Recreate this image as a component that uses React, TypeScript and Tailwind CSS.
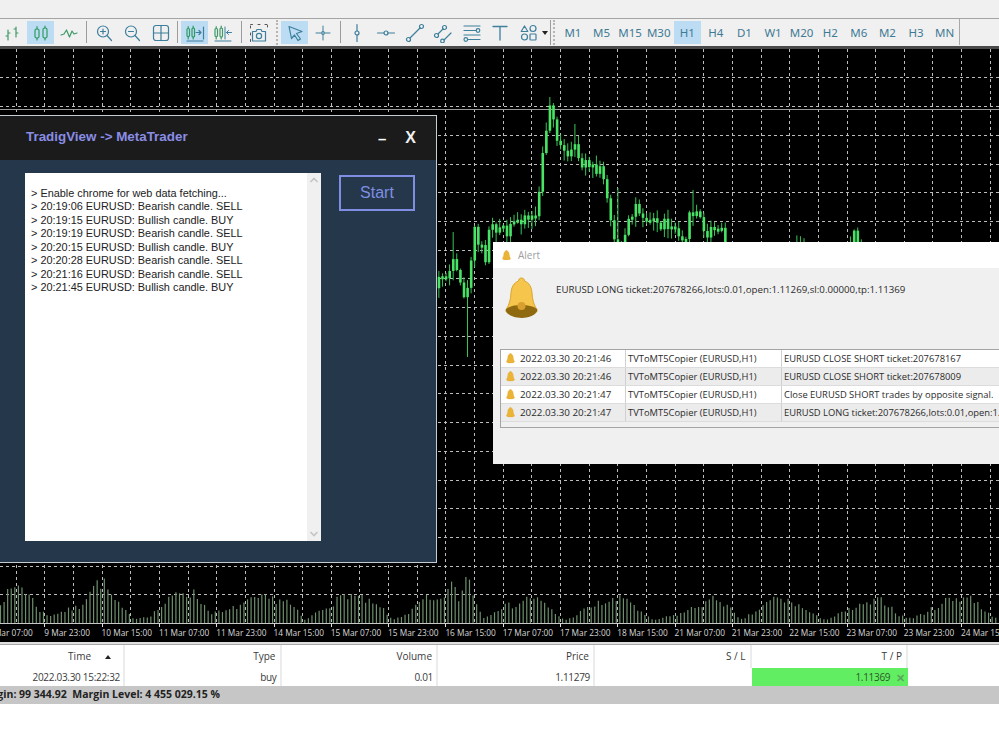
import React from "react";

function rng(seed: number) {
  return () => {
    seed |= 0;
    seed = (seed + 0x6d2b79f5) | 0;
    let t = Math.imul(seed ^ (seed >>> 15), 1 | seed);
    t = (t + Math.imul(t ^ (t >>> 7), 61 | t)) ^ t;
    return ((t ^ (t >>> 14)) >>> 0) / 4294967296;
  };
}
function interp(pts: number[][], x: number) {
  if (x <= pts[0][0]) return pts[0][1];
  for (let i = 1; i < pts.length; i++) {
    if (x <= pts[i][0]) {
      const [a, b] = pts[i - 1];
      const [c, d] = pts[i];
      return b + ((d - b) * (x - a)) / (c - a);
    }
  }
  return pts[pts.length - 1][1];
}

const pricePts = [
  [430, 290], [441, 277], [452, 268], [458, 285], [466, 297], [472, 232], [478, 245], [484, 257], [490, 220], [498, 228], [506, 237],
  [519, 215], [533, 220], [539, 187], [544, 133], [548, 105], [553, 112], [557, 148], [566, 160], [577, 150], [580, 165], [591, 173],
  [600, 172], [608, 203], [613, 237], [619, 262], [624, 240], [628, 223], [635, 205], [648, 217], [659, 225], [671, 224], [684, 235],
  [691, 212], [697, 212], [702, 235], [717, 230], [722, 236], [730, 300], [785, 300], [795, 232], [800, 246], [810, 275], [825, 256],
  [840, 262], [853, 238], [860, 250], [870, 300], [999, 340],
];
const volPts = [
  [0, 24], [19, 44], [30, 30], [40, 14], [48, 8], [60, 12], [80, 18], [90, 38], [102, 47], [115, 24], [128, 10], [135, 5], [150, 8],
  [170, 26], [180, 36], [195, 32], [210, 12], [225, 12], [240, 20], [258, 27], [285, 26], [298, 12], [305, 3], [320, 14], [340, 27],
  [347, 33], [365, 25], [385, 14], [392, 3], [410, 12], [425, 27], [437, 22], [452, 42], [460, 25], [467, 57], [475, 28], [483, 5],
  [500, 18], [515, 20], [532, 30], [545, 20], [558, 8], [567, 3], [585, 15], [600, 22], [628, 28], [640, 12], [653, 3], [680, 10],
  [700, 20], [718, 28], [730, 16], [740, 3], [755, 12], [775, 28], [795, 22], [815, 8], [827, 4], [850, 15], [870, 22], [883, 26],
  [900, 8], [912, 5], [930, 14], [947, 26], [971, 30], [985, 12], [999, 5],
];

function Chart() {
  const r = rng(42);
  const vs: number[] = [];
  for (let x = 15.7; x < 1000; x += 28.65) vs.push(x);
  const hs: number[] = [];
  for (let k = 1; k < 21; k++) hs.push(28.72 * k - 0.28);
  const candles: React.ReactNode[] = [];
  let prev = 285;
  for (let x = 430.5, i = 0; x < 870; x += 3.58, i++) {
    const c = interp(pricePts, x) + (r() - 0.5) * 18;
    const o = prev;
    prev = c;
    let top = Math.min(c, o) - 1 - r() * 8;
    let low = Math.max(c, o) + 1 + r() * 10;
    if (Math.abs(x - 466.5) < 1.8) low = 357;
    if (Math.abs(x - 548) < 1.8) top = 97;
    if (Math.abs(x - 575) < 1.8) top = 124;
    if (Math.abs(x - 451) < 1.8) top = 232;
    if (Math.abs(x - 691) < 1.8) top = 190;
    if (Math.abs(x - 618) < 1.8) top = 188;
    candles.push(
      <g key={i}>
        <line x1={x + 1.2} x2={x + 1.2} y1={top} y2={low} stroke="#38c455" strokeWidth={1} />
        <rect x={x} y={Math.min(c, o)} width={2.6} height={Math.max(3, Math.abs(c - o))} fill="#49e465" />
      </g>
    );
  }
  const r2 = rng(7);
  const vols: React.ReactNode[] = [];
  for (let x = 0.5, i = 0; x < 999; x += 3.58, i++) {
    const v = Math.max(2, interp(volPts, x) * (0.72 + r2() * 0.35));
    vols.push(<line key={i} x1={x} x2={x} y1={574 - v} y2={574} stroke="#6e906e" strokeWidth={1.2} />);
  }
  return (
    <svg width={999} height={578} viewBox="0 0 999 578" className="block">
      <g stroke="#bcbcbc" strokeWidth={1} strokeDasharray="3 3">
        {vs.map((x) => (
          <line key={x} x1={Math.round(x) + 0.5} x2={Math.round(x) + 0.5} y1={0} y2={574} />
        ))}
        {hs.map((y) => (
          <line key={y} x1={0} x2={999} y1={Math.round(y) + 0.5} y2={Math.round(y) + 0.5} />
        ))}
      </g>
      <line x1={0} x2={999} y1={60.5} y2={60.5} stroke="#9a9a9a" strokeWidth={1} />
      <g transform="translate(0,-49)">{candles}</g>
      {vols}
      <line x1={0} x2={999} y1={574.5} y2={574.5} stroke="#c8c8c8" strokeWidth={1} />
      {vs.filter((_, i) => i % 2 === 1).map((x) => (
        <line key={x} x1={Math.round(x) + 0.5} x2={Math.round(x) + 0.5} y1={574} y2={578} stroke="#e0e0e0" />
      ))}
    </svg>
  );
}

const labels = [
  "9 Mar 07:00", "9 Mar 23:00", "10 Mar 15:00", "11 Mar 07:00", "11 Mar 23:00", "14 Mar 15:00", "15 Mar 07:00", "15 Mar 23:00",
  "16 Mar 15:00", "17 Mar 07:00", "17 Mar 23:00", "18 Mar 15:00", "21 Mar 07:00", "21 Mar 23:00", "22 Mar 15:00", "23 Mar 07:00",
  "23 Mar 23:00", "24 Mar 15:00",
];

const Ic = ({ children }: { children: React.ReactNode }) => (
  <svg width={20} height={20} viewBox="0 0 20 20" fill="none" stroke="#3d7f9c" strokeWidth={1.2} strokeLinecap="round" strokeLinejoin="round">
    {children}
  </svg>
);

function Btn({ active, w = "w-[28.6px]", children }: { active?: boolean; w?: string; children: React.ReactNode }) {
  return (
    <div className={`${w} h-[27px] shrink-0 flex justify-center pt-[2px]`}>
      <div className={`w-[27px] h-[23px] flex items-center justify-center ${active ? "bg-[#bcdcf4]" : ""}`}>{children}</div>
    </div>
  );
}
const Sep = ({ w = "w-[5.5px]" }: { w?: string }) => (
  <div className={`${w} shrink-0 flex justify-center`}>
    <div className="w-px h-[22px] bg-[#9c9c9c] mt-[2px]" />
  </div>
);

function Toolbar() {
  const tfs = ["M1", "M5", "M15", "M30", "H1", "H4", "D1", "W1", "M20", "H2", "M6", "M2", "H3", "MN"];
  return (
    <div className="h-[27px] bg-[#f0f0f0] flex items-stretch -ml-[2px]">
      <Btn>
        <Ic>
          <g stroke="#3e9a68"><path d="M6 7v10M4 13h2M6 10h2M14 4v10M12 6h2M14 10h2" /></g>
        </Ic>
      </Btn>
      <Btn active>
        <Ic>
          <g stroke="#2f9a62"><rect x="4" y="6" width="4" height="9" rx="1.5" /><rect x="12" y="5" width="4" height="10" rx="1.5" /><path d="M6 3.5V6M6 15v2M14 3v2M14 15v2" /></g>
        </Ic>
      </Btn>
      <Btn>
        <Ic>
          <path d="M2 12l3-1 2.5-4 3 7 2.5-6 2 3 3-1" stroke="#3e9a68" />
        </Ic>
      </Btn>
      <Sep />
      <Btn>
        <Ic>
          <circle cx="9" cy="8.5" r="5.5" /><path d="M13 12.5l4.5 5M6.5 8.5h5M9 6v5" />
        </Ic>
      </Btn>
      <Btn>
        <Ic>
          <circle cx="9" cy="8.5" r="5.5" /><path d="M13 12.5l4.5 5M6.5 8.5h5" />
        </Ic>
      </Btn>
      <Btn>
        <Ic>
          <rect x="2.5" y="2.5" width="15" height="15" rx="2.5" /><path d="M10 2.5v15M2.5 10h15" />
        </Ic>
      </Btn>
      <Sep />
      <Btn active>
        <Ic>
          <g stroke="#2f9a62"><rect x="2" y="5.5" width="2.5" height="8" rx="1" /><rect x="7" y="5" width="2.5" height="9" rx="1" /><path d="M3.2 3.5v2M3.2 13.5V16M8.2 3v2M8.2 14v2" /></g>
          <path d="M11 9.5h5M14 7.5l2 2-2 2M18.5 4v12M2 18h16" />
        </Ic>
      </Btn>
      <Btn>
        <Ic>
          <g stroke="#3e9a68"><rect x="2" y="5.5" width="2.5" height="8" rx="1" /><rect x="7" y="5" width="2.5" height="9" rx="1" /><path d="M3.2 3.5v2M3.2 13.5V16M8.2 3v2M8.2 14v2" /></g>
          <path d="M12 4v12M13.5 9.5h5M15.5 7.5l-2 2 2 2M2 18h16" strokeWidth={1} />
        </Ic>
      </Btn>
      <Sep w="w-[7px]" />
      <Btn>
        <Ic>
          <path d="M1.5 18.5v-2M1.5 12V9M1.5 5V1.5H5M9 1.5h3M16 1.5h2.5V4" strokeDasharray="2 1.5" stroke="#555" strokeWidth={1} />
          <path d="M7 8.5l1-2h4l1 2h3.5v9.5H3.5V8.5z" />
          <circle cx="10" cy="13" r="2.6" />
        </Ic>
      </Btn>
      <div className="w-[7px] shrink-0 flex justify-center"><div className="w-0 h-[25px] border-l-2 border-dotted border-[#b5b5b5] mt-[1px]" /></div>
      <Btn active>
        <Ic>
          <path d="M4 3.5l13 5-5.5 2 4 5.5-2.5 1.5-3.5-5.5-3 3.5z" />
        </Ic>
      </Btn>
      <Btn>
        <Ic>
          <path d="M10 3v5M10 12v5M3 10h5M12 10h5" strokeWidth={1} /><circle cx="10" cy="10" r="1.3" />
        </Ic>
      </Btn>
      <Sep />
      <Btn>
        <Ic><path d="M10 1.5v6.5M10 12v6.5" /><circle cx="10" cy="10" r="2" /></Ic>
      </Btn>
      <Btn>
        <Ic><path d="M1.5 10H8M12 10h6.5" /><circle cx="10" cy="10" r="2" /></Ic>
      </Btn>
      <Btn>
        <Ic><path d="M5 15l10-10" /><circle cx="3.5" cy="16.5" r="2" /><circle cx="16.5" cy="3.5" r="2" /></Ic>
      </Btn>
      <Btn>
        <Ic><path d="M5 11l5-5M11 17l7-7" /><circle cx="3.5" cy="12.5" r="2" /><circle cx="11.5" cy="4.5" r="2" /><circle cx="9.5" cy="18" r="1.8" /></Ic>
      </Btn>
      <Btn>
        <Ic><path d="M2 3h16M2 7.5h12M2 12h16M6 16.5h12" /><circle cx="16" cy="7.5" r="1.8" /><circle cx="3.8" cy="16.5" r="1.8" /></Ic>
      </Btn>
      <Btn>
        <Ic><path d="M3 3.5h14M10 3.5V17" strokeWidth={1.3} /></Ic>
      </Btn>
      <div className="w-[34px] h-[27px] shrink-0 flex items-center pl-[4px] gap-[3px]">
        <Ic>
          <path d="M5.5 3l3.3 5.5H2.2z" /><circle cx="14" cy="5.5" r="3" /><circle cx="5.5" cy="14" r="3" /><rect x="11" y="11" width="6" height="6" rx="0.8" />
        </Ic>
        <div className="w-0 h-0 border-x-[3px] border-x-transparent border-t-[4px] border-t-[#222]" />
      </div>
      <div className="w-[10px] shrink-0 flex items-start gap-[1px] pt-[1px] pl-[1px]">
        <div className="w-px h-[25px] bg-[#9c9c9c]" />
        <div className="w-0 h-[25px] border-l-2 border-dotted border-[#b5b5b5] ml-[1px]" />
      </div>
      {tfs.map((t) => (
        <Btn key={t} active={t === "H1"}>
          <span className="font-['Noto_Sans',sans-serif] text-[11.5px] text-[#3f7a94]">{t}</span>
        </Btn>
      ))}
      <div className="w-px h-[26px] bg-[#a8a8a8] ml-[0.5px]" />
    </div>
  );
}

const logLines = [
  "> Enable chrome for web data fetching...",
  "> 20:19:06 EURUSD: Bearish candle. SELL",
  "> 20:19:15 EURUSD: Bullish candle. BUY",
  "> 20:19:19 EURUSD: Bearish candle. SELL",
  "> 20:20:15 EURUSD: Bullish candle. BUY",
  "> 20:20:28 EURUSD: Bearish candle. SELL",
  "> 20:21:16 EURUSD: Bearish candle. SELL",
  "> 20:21:45 EURUSD: Bullish candle. BUY",
];

function AppWindow() {
  return (
    <div className="absolute left-0 top-[66px] w-[437px] h-[448px] border border-l-0 border-[#c4ccd4] flex flex-col font-['Liberation_Sans',sans-serif]">
      <div className="h-[44px] bg-[#1b1b1b] flex items-center pl-[26px] shrink-0">
        <span className="text-[13.4px] font-bold text-[#8a8de6] flex-1 -mt-[1px]">TradigView -&gt; MetaTrader</span>
        <span className="text-white font-bold text-[15px] mr-[19px] mt-[2px]">–</span>
        <span className="text-[#f0f0f0] font-bold text-[16px] mr-[20px]">X</span>
      </div>
      <div className="flex-1 bg-[#25374a] flex items-start pl-[25px] pt-[13px]">
        <div className="w-[296px] h-[368px] bg-white flex shrink-0">
          <div className="flex-1 pt-[14px] pl-[6px] text-[10.9px] leading-[13.45px] text-[#222] whitespace-pre">
            {logLines.map((l) => (
              <div key={l}>{l}</div>
            ))}
          </div>
          <div className="w-[14px] bg-[#f0f0f0] flex flex-col justify-between items-center py-[3px]">
            <svg width={10} height={8} viewBox="0 0 10 8" fill="none" stroke="#c4c4c4" strokeWidth={1.6}><path d="M1.5 6L5 2.5 8.5 6" /></svg>
            <svg width={10} height={8} viewBox="0 0 10 8" fill="none" stroke="#c4c4c4" strokeWidth={1.6}><path d="M1.5 2L5 5.5 8.5 2" /></svg>
          </div>
        </div>
        <div className="ml-[18px] mt-[2px] w-[76px] h-[36px] border-2 border-[#7f8ee2] flex items-center justify-center text-[16px] text-[#7f8ee2]">
          Start
        </div>
      </div>
    </div>
  );
}

function Bell({ s, big }: { s: number; big?: boolean }) {
  return (
    <svg width={s} height={s * 1.2} viewBox="0 0 34 42" className="shrink-0">
      <path d="M17 1c2 0 3 1.4 3 3 5 2 7 6 7.5 12 .5 7 1.5 11 5 17 1 3-6 6-15.5 6S.5 36 1.5 33c3.5-6 4.5-10 5-17C7 10 9 6 14 4c0-1.6 1-3 3-3z" fill={big ? "#f6c64c" : "#ecb436"} stroke={big ? "#d9a52e" : "#d89a20"} strokeWidth={1} />
      {big && <path d="M1.5 32c4-3 9-4 15.5-4s11.5 1 15.5 4c1.5 4-6 9-15.5 9S0 36 1.5 32z" fill="#8f6a10" />}
      {big && <circle cx="17" cy="29" r="4" fill="#d9a030" />}
    </svg>
  );
}

const rows = [
  ["2022.03.30 20:21:46", "EURUSD CLOSE SHORT ticket:207678167"],
  ["2022.03.30 20:21:46", "EURUSD CLOSE SHORT ticket:207678009"],
  ["2022.03.30 20:21:47", "Close EURUSD SHORT trades by opposite signal."],
  ["2022.03.30 20:21:47", "EURUSD LONG ticket:207678266,lots:0.01,open:1.11269,sl:0.00000,tp:1.11369"],
];

function Alert() {
  return (
    <div className="absolute left-[493px] top-[193px] w-[520px] h-[222px] bg-[#f0f0f0] flex flex-col font-['Open_Sans',sans-serif] text-[#2b2b2b]">
      <div className="h-[26px] bg-white flex items-center pl-[9px] gap-[7px] shrink-0">
        <Bell s={9} />
        <span className="text-[10px] text-[#a0a0a0]">Alert</span>
      </div>
      <div className="flex h-[81px] shrink-0 pl-[11px] pt-[9px]">
        <Bell s={35} big />
        <div className="ml-[17px] mt-[6px] text-[9.7px] leading-[14px] whitespace-nowrap">
          EURUSD LONG ticket:207678266,lots:0.01,open:1.11269,sl:0.00000,tp:1.11369
        </div>
      </div>
      <div className="ml-[7px] h-[79px] border border-r-0 border-[#a4a4a4] text-[9.4px] shrink-0">
        {rows.map((r, i) => (
          <div key={i} className={`h-[18px] flex items-center border-b border-[#dcdcdc] whitespace-nowrap ${i % 2 ? "bg-[#ececec]" : "bg-white"}`}>
            <div className="w-[125px] h-full flex items-center pl-[5px] gap-[5px] border-r border-[#d0d0d0] shrink-0">
              <Bell s={9} />
              <span className="text-[9.8px] pt-[2px]">{r[0]}</span>
            </div>
            <div className="w-[156px] h-full flex items-center pl-[2px] pt-[2px] border-r border-[#d0d0d0] shrink-0">TVToMT5Copier (EURUSD,H1)</div>
            <div className="pl-[2px] pt-[2px]">{r[1]}</div>
          </div>
        ))}
      </div>
    </div>
  );
}

function Cell({ w, children, cls = "" }: { w: string; children?: React.ReactNode; cls?: string }) {
  return <div className={`${w} shrink-0 h-full flex items-center justify-end ${cls}`}>{children}</div>;
}

function BottomTable() {
  return (
    <div className="font-['Open_Sans',sans-serif] text-[#3a3a3a]">
      <div className="h-[23px] flex bg-white text-[10px]">
        <Cell w="w-[125px]" cls="border-r-2 border-[#ececec] pr-[12px]">
          <span className="mr-[14px]">Time</span>
          <div className="w-0 h-0 border-x-[3px] border-x-transparent border-b-[4px] border-b-[#222]" />
        </Cell>
        <Cell w="w-[156.5px]" cls="border-r-2 border-[#ececec] pr-[4px]">Type</Cell>
        <Cell w="w-[156.5px]" cls="border-r-2 border-[#ececec] pr-[4px]">Volume</Cell>
        <Cell w="w-[157px]" cls="border-r-2 border-[#ececec] pr-[4px]">Price</Cell>
        <Cell w="w-[156.5px]" cls="border-r-2 border-[#ececec] pr-[4px]">S / L</Cell>
        <Cell w="w-[156.5px]" cls="border-r-2 border-[#ececec] pr-[4px]">T / P</Cell>
      </div>
      <div className="h-[18px] flex bg-white text-[10px] tracking-[-0.3px]">
        <Cell w="w-[125px]" cls="border-r-2 border-[#ececec] pr-[3px]">2022.03.30 15:22:32</Cell>
        <Cell w="w-[156.5px]" cls="border-r-2 border-[#ececec] pr-[3px]">buy</Cell>
        <Cell w="w-[156.5px]" cls="border-r-2 border-[#ececec] pr-[3px]">0.01</Cell>
        <Cell w="w-[157px]" cls="border-r-2 border-[#ececec] pr-[3px]">1.11279</Cell>
        <Cell w="w-[156.5px]" />
        <Cell w="w-[156.5px]" cls="bg-[#62ee62] pr-[3px]">
          <span className="text-[#2a5a2a]">1.11369</span>
          <span className="ml-[6px] text-[#5aa85a] text-[11px] font-bold leading-none">✕</span>
        </Cell>
      </div>
    </div>
  );
}

export default function App() {
  return (
    <div className="w-[999px] h-[750px] overflow-hidden bg-white flex flex-col">
      <div className="h-[18px] bg-[#f0f0f0] shrink-0" />
      <div className="h-px bg-[#a4a4a4] shrink-0" />
      <Toolbar />
      <div className="h-[3px] bg-[#4a4a4a] shrink-0" />
      <div className="relative h-[593px] bg-black shrink-0 overflow-hidden">
        <Chart />
        <div className="flex -ml-[13px] h-[15px] text-[8.3px] leading-[12px] text-[#d8d8d8] font-['Open_Sans',sans-serif] whitespace-nowrap">
          {labels.map((l) => (
            <div key={l} className="w-[57.3px] shrink-0">{l}</div>
          ))}
        </div>
        <AppWindow />
        <Alert />
      </div>
      <div className="h-[3px] bg-[#dedede] border-b border-[#a8a8a8] shrink-0" />
      <BottomTable />
      <div className="h-[18px] bg-[#c6c6c6] shrink-0 font-['Open_Sans',sans-serif]">
        <div className="w-[220px] h-full flex items-center justify-end overflow-hidden whitespace-pre text-[10.5px] font-bold text-[#222]">
          Margin: 99 344.92  Margin Level: 4 455 029.15 %
        </div>
      </div>
    </div>
  );
}
